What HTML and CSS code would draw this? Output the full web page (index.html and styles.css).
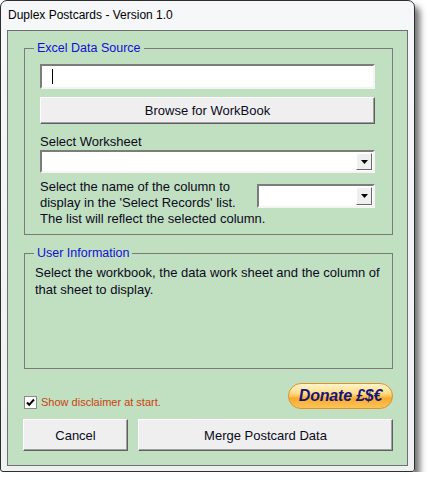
FILE: index.html
```html
<!DOCTYPE html>
<html lang="en">
<head>
    <meta charset="UTF-8">
    <title>Duplex Postcards - Version 1.0</title>
    <link rel="stylesheet" href="styles.css">
</head>
<body>
    <div class="window">
        <div class="titlebar">Duplex Postcards - Version 1.0</div>

        <div class="client">
            <!-- workbook / worksheet selection -->
            <fieldset class="group group-source">
                <legend>Excel Data Source</legend>
                <div class="group-body">
                    <div class="textbox"><span class="caret"></span></div>
                    <div class="button browse">Browse for WorkBook</div>
                    <div class="field-label">Select Worksheet</div>
                    <div class="combo combo-wide">
                        <span class="drop"><svg width="7" height="4" viewBox="0 0 7 4"><path d="M0 0h7L3.5 4z" fill="#000"/></svg></span>
                    </div>
                    <div class="column-row">
                        <p class="column-text">Select the name of the column to<br>display in the 'Select Records' list.<br>The list will reflect the selected column.</p>
                        <div class="combo combo-narrow">
                            <span class="drop"><svg width="7" height="4" viewBox="0 0 7 4"><path d="M0 0h7L3.5 4z" fill="#000"/></svg></span>
                        </div>
                    </div>
                </div>
            </fieldset>

            <!-- help text -->
            <fieldset class="group group-info">
                <legend>User Information</legend>
                <div class="group-body">
                    <p class="info-text">Select the workbook, the data work sheet and the column of<br>that sheet to display.</p>
                </div>
            </fieldset>

            <div class="options-row">
                <div class="check">
                    <span class="checkbox"><svg width="9" height="9" viewBox="0 0 9 9"><path d="M1 4.5l2.2 2.3L8 1.5" fill="none" stroke="#000" stroke-width="2"/></svg></span>
                    <span class="check-text">Show disclaimer at start.</span>
                </div>
                <div class="donate">Donate £$€</div>
            </div>

            <div class="actions">
                <div class="button cancel">Cancel</div>
                <div class="button merge">Merge Postcard Data</div>
            </div>
        </div>
    </div>
</body>
</html>
```

FILE: styles.css
```css
body {
    margin: 0;
    background-color: #ffffff;
    font-family: 'Liberation Sans', Arial, sans-serif;
    color: #0a0a20;
}
.window {
    width: 415px;
    height: 472px;
    box-sizing: border-box;
    border: 1px solid #2e2e2e;
    border-radius: 7px 7px 3px 3px;
    background-image: linear-gradient(to bottom, #f6f7f8, #eef0f2);
    box-shadow: 5px 6px 6px rgba(0, 0, 0, 0.55);
    display: flex;
    flex-direction: column;
}
.titlebar {
    height: 29px;
    padding-left: 7px;
    font-size: 12px;
    line-height: 29px;
    color: #000000;
}
.client {
    height: 436px;
    box-sizing: border-box;
    margin: 0 6px;
    border: 1px solid #6f6f6f;
    background-color: #c1dfc1;
    display: flex;
    flex-direction: column;
    font-size: 13px;
}
.group {
    margin: 0 14px 0 16px;
    padding: 0;
    min-inline-size: 0;
    border: 1px solid #7a7a7a;
}
.group legend {
    margin-left: 9px;
    padding: 0 3px;
    font-size: 12.5px;
    line-height: 14px;
    color: #1010d8;
}
.group-source {
    margin-top: 10px;
}
.group-source .group-body {
    padding: 9px 17px 7px 15px;
}
.group-info {
    margin-top: 11px;
    height: 123px;
    box-sizing: border-box;
}
.group-info .group-body {
    padding: 4px 10px 0 10px;
}
.textbox {
    height: 25px;
    box-sizing: border-box;
    border: 2px solid;
    border-color: #7c7c7c #f4f4f4 #f4f4f4 #7c7c7c;
    background-color: #ffffff;
    display: flex;
    align-items: center;
    padding-left: 10px;
}
.caret {
    width: 1px;
    height: 15px;
    background-color: #000000;
}
.button {
    box-sizing: border-box;
    border: 1px solid;
    border-color: #ffffff #5f5f5f #5f5f5f #ffffff;
    box-shadow: inset -1px -1px 0 #a0a0a0;
    background-color: #efefef;
    display: flex;
    align-items: center;
    justify-content: center;
    color: #0a0a20;
}
.browse {
    height: 27px;
    margin-top: 8px;
}
.field-label {
    margin-top: 10px;
    line-height: 15px;
}
.combo {
    box-sizing: border-box;
    border: 2px solid;
    border-color: #7c7c7c #f4f4f4 #f4f4f4 #7c7c7c;
    background-color: #ffffff;
    display: flex;
    justify-content: flex-end;
    align-items: center;
    padding-right: 1px;
}
.combo-wide {
    height: 23px;
    margin-top: 1px;
}
.combo-narrow {
    width: 118px;
    height: 24px;
    margin-top: 5px;
}
.drop {
    width: 16px;
    height: 17px;
    box-sizing: border-box;
    border: 1px solid;
    border-color: #ffffff #6a6a6a #6a6a6a #ffffff;
    background-color: #efefef;
    display: flex;
    align-items: center;
    justify-content: center;
}
.combo-narrow .drop {
    height: 18px;
}
.column-row {
    margin-top: 6px;
    display: grid;
}
.column-text,
.column-row .combo {
    grid-area: 1 / 1;
}
.column-text {
    margin: 0;
    line-height: 16px;
}
.column-row .combo {
    justify-self: end;
    align-self: start;
}
.info-text {
    margin: 0;
    line-height: 17px;
}
.options-row {
    margin: 14px 14px 0 16px;
    height: 26px;
    display: flex;
    justify-content: space-between;
    align-items: flex-end;
}
.check {
    display: flex;
    align-items: center;
    gap: 4px;
}
.checkbox {
    width: 13px;
    height: 13px;
    box-sizing: border-box;
    border: 1px solid #8a8a8a;
    background-color: #ffffff;
    display: flex;
    align-items: center;
    justify-content: center;
}
.check-text {
    font-size: 11px;
    line-height: 13px;
    color: #c8440e;
}
.donate {
    width: 105px;
    height: 26px;
    box-sizing: border-box;
    border: 1px solid #e0922a;
    border-radius: 13px;
    background-image: linear-gradient(to bottom, #fff4cc 0%, #ffdc85 40%, #f9ab2c 60%, #fbc35a 100%);
    display: flex;
    align-items: center;
    justify-content: center;
    font-size: 16px;
    font-weight: bold;
    font-style: italic;
    color: #16167a;
    letter-spacing: -0.2px;
}
.actions {
    margin: 10px 0 0 15px;
    display: flex;
    gap: 10px;
}
.actions .button {
    height: 32px;
}
.cancel {
    width: 105px;
}
.merge {
    width: 255px;
}
```
